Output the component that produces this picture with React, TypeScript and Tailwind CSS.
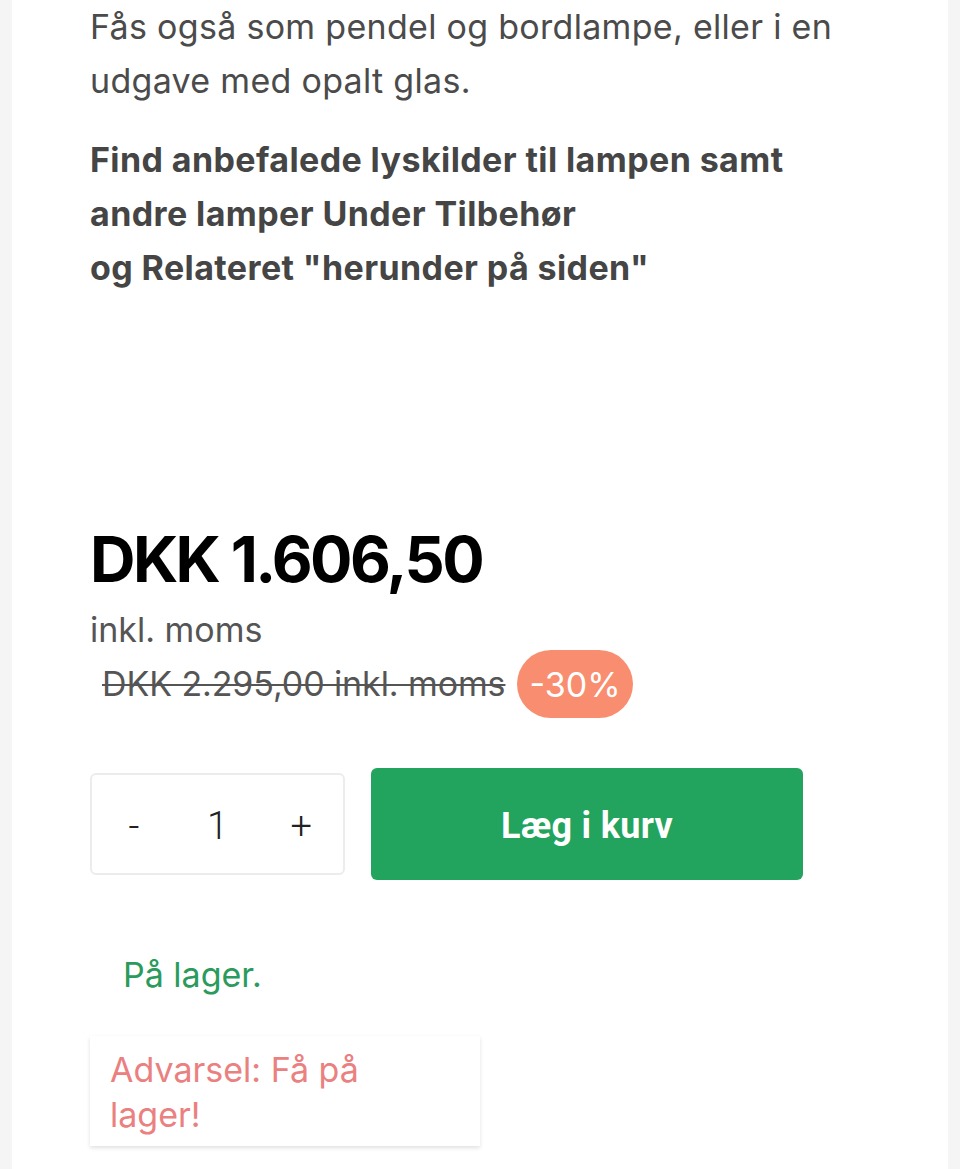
import React, { useState } from "react";

const body = { fontFamily: "Inter, 'Noto Sans', sans-serif" };
const btn = { fontFamily: "Roboto, 'Liberation Sans', sans-serif" };

export default function App() {
  const [qty, setQty] = useState(1);

  return (
    <div className="min-h-[1169px] bg-[#f5f5f5] px-3" style={body}>
      <div className="min-h-[1169px] bg-white px-[78px]">
        <p className="text-[34px] leading-[54px] tracking-[0.3px] text-[#4b4b4b]">
          Fås også som pendel og bordlampe, eller i en
          <br />
          udgave med opalt glas.
        </p>
        <p className="mt-[25px] text-[34px] font-bold leading-[54px] tracking-[0.4px] text-[#454545]">
          Find anbefalede lyskilder til lampen samt
          <br />
          andre lamper Under Tilbehør
          <br />
          og Relateret "herunder på siden"
        </p>

        {/* price block */}
        <div className="mt-[228px] text-[63px] font-bold leading-[72px] tracking-[-2.6px] text-black">
          DKK 1.606,50
        </div>
        <div className="mt-[15px] text-[34px] leading-[40px] text-[#555]">inkl. moms</div>
        <div className="flex items-center gap-[12px]">
          <span className="pl-3 text-[34px] leading-[40px] tracking-[-0.1px] text-[#555] line-through decoration-[2px]">
            DKK 2.295,00 inkl. moms
          </span>
          <span className="flex h-[68px] items-center rounded-full bg-[#f88d6f] px-[12px] text-[34px] text-white">
            -30%
          </span>
        </div>

        {/* qty + add to cart */}
        <div className="mt-[50px] flex items-center gap-[26px]">
          <div
            className="grid h-[102px] w-[255px] grid-cols-3 items-center rounded-md border-2 border-[#ececec] pt-1 text-[38px] font-light text-[#222]"
            style={btn}
          >
            <button className="text-center" onClick={() => setQty(Math.max(1, qty - 1))}>
              -
            </button>
            <span className="text-center">{qty}</span>
            <button className="text-center" onClick={() => setQty(qty + 1)}>
              +
            </button>
          </div>
          <button
            className="h-[112px] w-[432px] rounded-md bg-[#22a45e] pt-1 text-[36px] font-bold tracking-[0.3px] text-white"
            style={btn}
          >
            Læg i kurv
          </button>
        </div>

        <div className="mt-[75px] pl-[33px] text-[34px] leading-[40px] text-[#2a9b5c]">På lager.</div>

        <div className="mt-[41px] w-[390px] bg-white pb-[9px] pl-5 pr-20 pt-[11px] text-[34px] leading-[45px] text-[#ea8080] shadow-[0_2px_4px_rgba(0,0,0,0.12)]">
          Advarsel: Få på lager!
        </div>
      </div>
    </div>
  );
}
